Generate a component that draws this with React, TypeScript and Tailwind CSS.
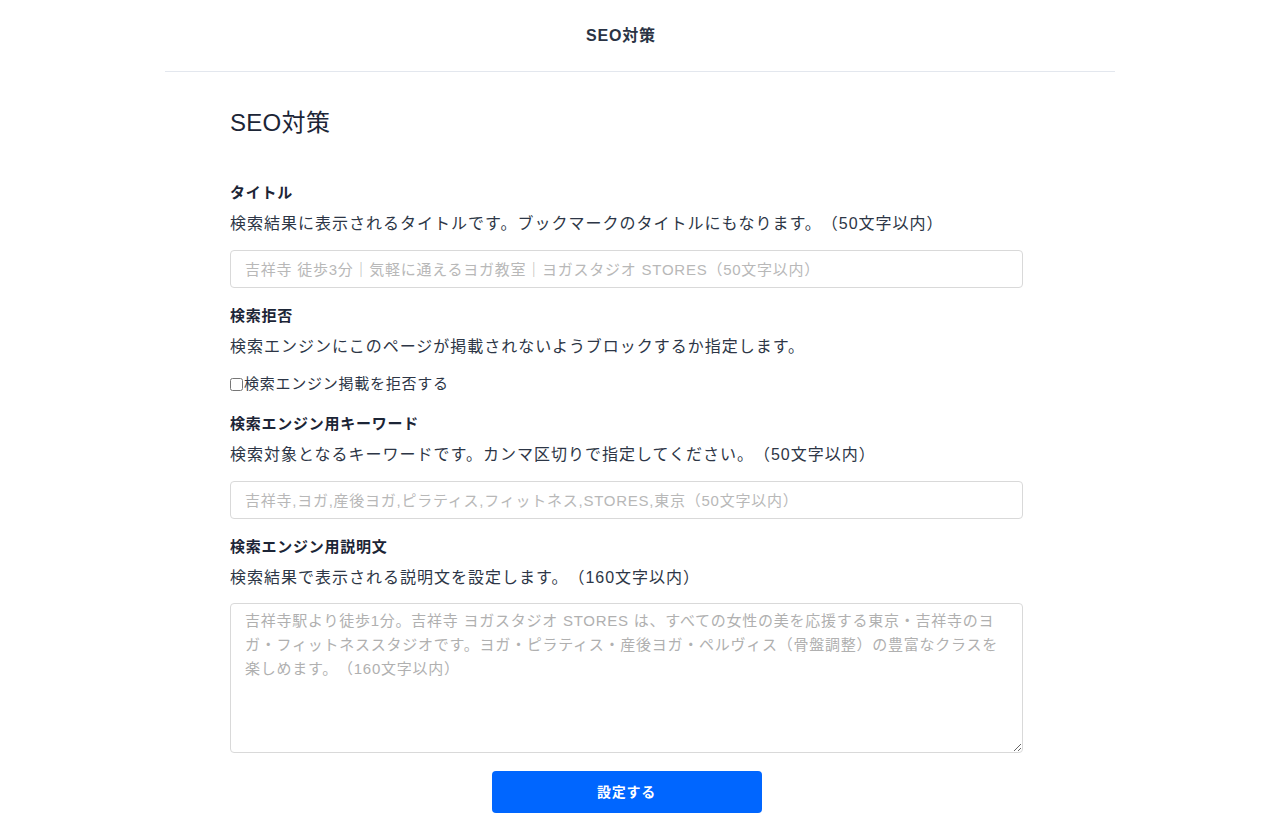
import React from 'react';

const font = { fontFamily: '"Liberation Sans", "Noto Sans CJK JP", sans-serif' };

type SectionProps = {
  label: string;
  description: string;
  children: React.ReactNode;
};

const Section: React.FC<SectionProps> = ({ label, description, children }) => (
  <section className="mb-[18px]">
    <h3 className="text-[15px] leading-[20px] font-bold tracking-wider text-[#1c2536]">{label}</h3>
    <p className="mt-[9px] text-[16px] leading-[24px] tracking-[1px] text-[#2d3646]">{description}</p>
    {children}
  </section>
);

export default function App() {
  return (
    <div className="min-h-[840px] bg-white [text-spacing-trim:space-all]" style={font}>
      <div className="mx-auto w-[950px]">
        {/* Header */}
        <header className="h-[72px] flex items-center justify-center pr-[38px] pt-[1px] border-b border-[#e3e7ee]">
          <h1 className="text-[16px] font-bold tracking-wider text-[#2a3344]">SEO対策</h1>
        </header>

        {/* Form */}
        <main className="pl-[65px] pr-[92px]">
          <h2 className="mt-[35px] mb-[-1px] text-[24px] leading-[32px] tracking-[0.3px] text-[#1c2536]">SEO対策</h2>

          <div className="mt-[45px]">
            <Section
              label="タイトル"
              description="検索結果に表示されるタイトルです。ブックマークのタイトルにもなります。（50文字以内）"
            >
              <input
                type="text"
                placeholder="吉祥寺 徒歩3分｜気軽に通えるヨガ教室｜ヨガスタジオ STORES（50文字以内）"
                className="mt-[14px] block w-full h-[38px] px-[14px] rounded-[4px] border border-[#d9d9d9] bg-white text-[15px] tracking-wider text-[#333] placeholder:text-[#b8b8b8] outline-none"
              />
            </Section>

            <Section
              label="検索拒否"
              description="検索エンジンにこのページが掲載されないようブロックするか指定します。"
            >
              <label className="mt-[15px] flex items-center text-[15px] leading-[20px] tracking-wider text-[#2d3646]">
                <input type="checkbox" className="w-[13px] h-[13px] m-0 mr-[1px]" />
                検索エンジン掲載を拒否する
              </label>
            </Section>

            <div className="h-[2px]" />

            <Section
              label="検索エンジン用キーワード"
              description="検索対象となるキーワードです。カンマ区切りで指定してください。（50文字以内）"
            >
              <input
                type="text"
                placeholder="吉祥寺,ヨガ,産後ヨガ,ピラティス,フィットネス,STORES,東京（50文字以内）"
                className="mt-[14px] block w-full h-[38px] px-[14px] rounded-[4px] border border-[#d9d9d9] bg-white text-[15px] tracking-wider text-[#333] placeholder:text-[#b8b8b8] outline-none"
              />
            </Section>

            <Section
              label="検索エンジン用説明文"
              description="検索結果で表示される説明文を設定します。（160文字以内）"
            >
              <textarea
                placeholder="吉祥寺駅より徒歩1分。吉祥寺 ヨガスタジオ STORES は、すべての女性の美を応援する東京・吉祥寺のヨガ・フィットネススタジオです。ヨガ・ピラティス・産後ヨガ・ペルヴィス（骨盤調整）の豊富なクラスを楽しめます。（160文字以内）"
                className="mt-[13px] block w-full h-[150px] px-[14px] py-[5px] rounded-[4px] border border-[#d9d9d9] bg-white text-[15px] leading-[24px] tracking-wider text-[#333] placeholder:text-[#b0b0b0] outline-none"
              />
            </Section>
          </div>

          <div className="flex justify-center">
            <button
              type="button"
              className="w-[270px] h-[42px] rounded-[4px] bg-[#0066ff] text-white text-[14px] font-bold tracking-wider"
            >
              設定する
            </button>
          </div>
        </main>
      </div>
    </div>
  );
}
